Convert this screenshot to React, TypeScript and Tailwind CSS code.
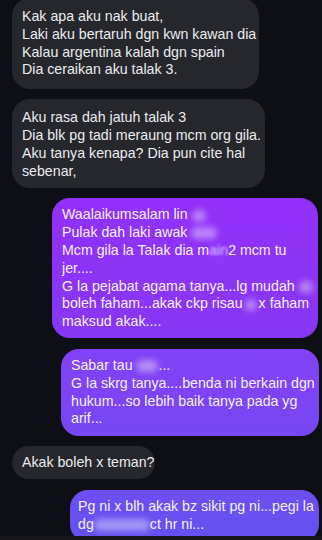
import React from "react";

const Blur = ({ w }: { w: string }) => (
  <span className={`inline-block align-middle h-[12px] ${w} rounded-full bg-white/40 blur-[3px]`} />
);

function Incoming({ lines, className = "" }: { lines: React.ReactNode[]; className?: string }) {
  return (
    <div className={`self-start ml-[12px] rounded-[18px] bg-[#26272d] px-[10px] text-[#ececee] ${className}`}>
      {lines.map((l, i) => (
        <div key={i} className="whitespace-nowrap">
          {l}
        </div>
      ))}
    </div>
  );
}

function Outgoing({ lines, className = "" }: { lines: React.ReactNode[]; className?: string }) {
  return (
    <div className={`self-end rounded-[18px] text-[#f4f0ff] ${className}`}>
      {lines.map((l, i) => (
        <div key={i} className="whitespace-nowrap">
          {l}
        </div>
      ))}
    </div>
  );
}

export default function App() {
  return (
    <div
      className="h-[540px] w-[322px] overflow-hidden bg-[#0e0f14] flex flex-col text-[14.2px] leading-[17.8px]"
      style={{ fontFamily: '"Liberation Sans", Arial, sans-serif' }}
    >
      <div className="h-[536px] overflow-hidden flex flex-col gap-[10px]">
        <Incoming
          className="mt-[-2px] pt-[10px] pb-[10px] w-[247px]"
          lines={[
            "Kak apa aku nak buat,",
            "Laki aku bertaruh dgn kwn kawan dia",
            "Kalau argentina kalah dgn spain",
            "Dia ceraikan aku talak 3.",
          ]}
        />
        <Incoming
          className="pt-[10px] pb-[8px] w-[253px]"
          lines={[
            "Aku rasa dah jatuh talak 3",
            "Dia blk pg tadi meraung mcm org gila.",
            "Aku tanya kenapa? Dia pun cite hal",
            "sebenar,",
          ]}
        />
        <Outgoing
          className="mr-[4px] w-[266px] pl-[10px] pt-[8px] pb-[7px] bg-gradient-to-b from-[#9230f8] to-[#8637f3]"
          lines={[
            <>
              Waalaikumsalam lin <Blur w="w-[14px]" />
            </>,
            <>
              Pulak dah laki awak <Blur w="w-[26px]" />
            </>,
            <>
              Mcm gila la Talak dia m<span className="blur-[1px] opacity-80">ain</span>2 mcm tu
            </>,
            "jer....",
            <>
              G la pejabat agama tanya...lg mudah <Blur w="w-[14px]" />
            </>,
            <>
              boleh faham...akak ckp risau<Blur w="w-[12px] mx-[2px]" />x faham
            </>,
            "maksud akak....",
          ]}
        />
        <Outgoing
          className="mt-[1px] mr-[3px] w-[258px] pl-[10px] pt-[8px] pb-[8px] bg-gradient-to-b from-[#8241f6] to-[#7647f2]"
          lines={[
            <>
              Sabar tau <Blur w="w-[22px]" />
              ...
            </>,
            "G la skrg tanya....benda ni berkain dgn",
            "hukum...so lebih baik tanya pada yg",
            "arif...",
          ]}
        />
        <Incoming className="py-[7.5px] w-[143px]" lines={["Akak boleh x teman?"]} />
        <Outgoing
          className="mt-[1px] mr-[3px] w-[249px] pl-[8px] pt-[8px] pb-[8px] bg-gradient-to-b from-[#6d4ef1] to-[#6451ef]"
          lines={[
            "Pg ni x blh akak bz sikit pg ni...pegi la",
            <>
              dg<Blur w="w-[56px]" />ct hr ni...
            </>,
          ]}
        />
      </div>
      <div className="h-[4px] bg-[#16161b]" />
    </div>
  );
}
